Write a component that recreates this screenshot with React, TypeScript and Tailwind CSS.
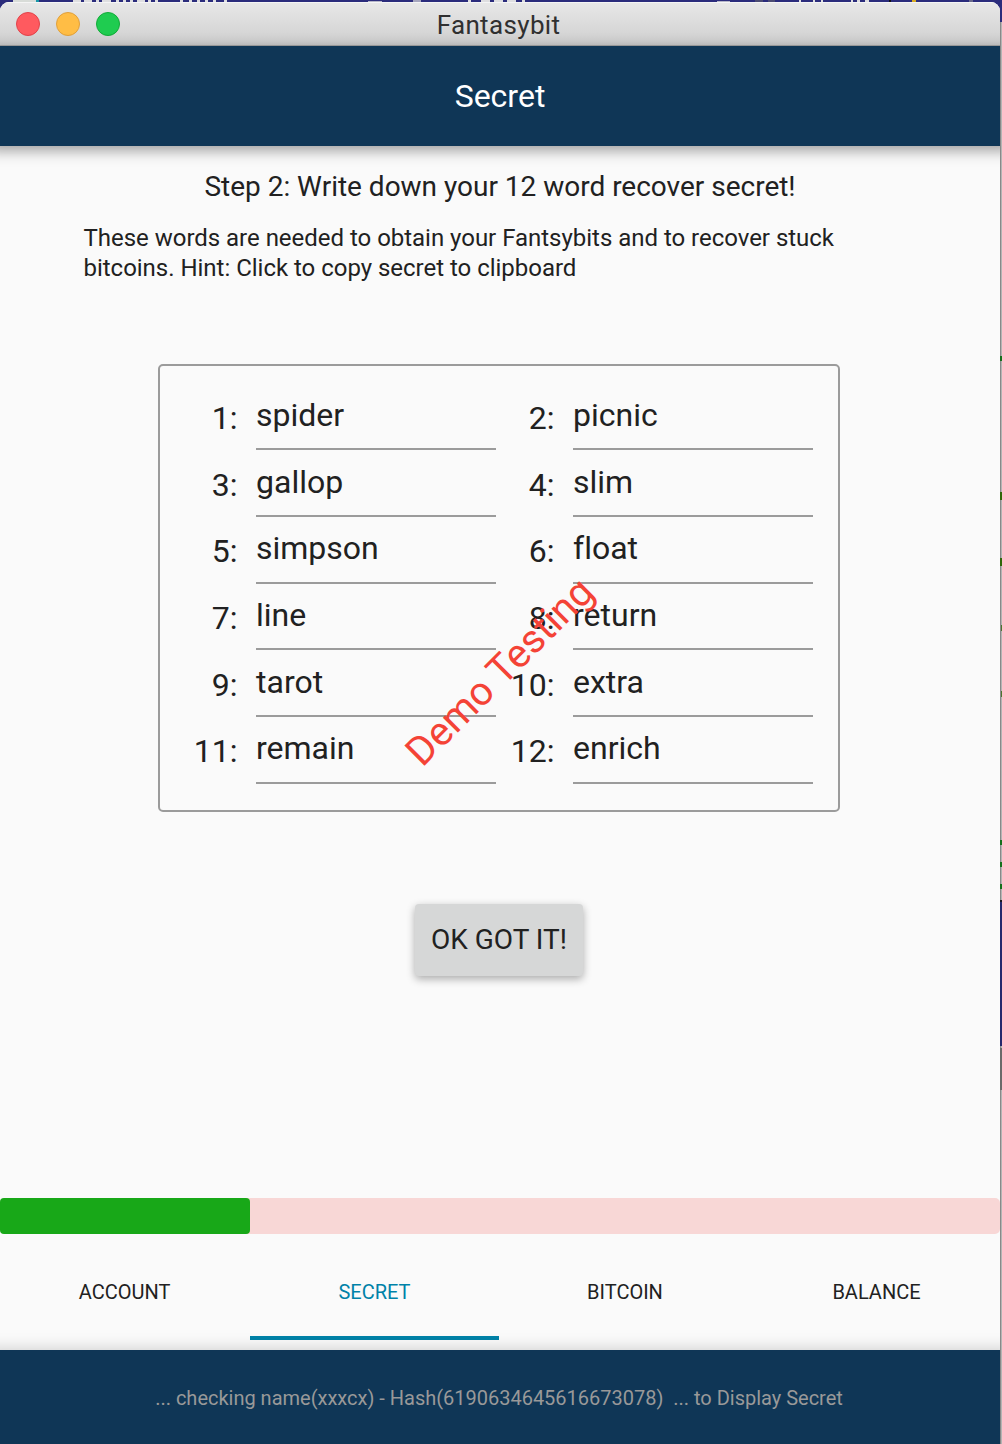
const words = [
  'spider', 'picnic', 'gallop', 'slim', 'simpson', 'float',
  'line', 'return', 'tarot', 'extra', 'remain', 'enrich',
];

const tabs = ['ACCOUNT', 'SECRET', 'BITCOIN', 'BALANCE'];

// Fragments of the desktop that show above the window.
function DesktopTop() {
  return (
    <div className="flex h-[2px] w-[1002px] overflow-hidden bg-[#2b2c7c] *:shrink-0">
      <i className="ml-[13px] h-[2px] w-[23px] bg-[#d8dcd8]" />
      <i className="h-[2px] w-[3px] bg-[#1797a8]" />
      <i className="ml-[34px] h-[2px] w-[8px] bg-[#dedee0]" />
      <i className="ml-[3px] h-[2px] w-[8px] bg-[#dedee0]" />
      <i className="ml-[4px] h-[2px] w-[3px] bg-[#dedee0]" />
      <i className="ml-[3px] h-[2px] w-[9px] bg-[#dedee0]" />
      <i className="ml-[5px] h-[2px] w-[3px] bg-[#dedee0]" />
      <i className="ml-[4px] h-[2px] w-[3px] bg-[#dedee0]" />
      <i className="ml-[4px] h-[2px] w-[3px] bg-[#dedee0]" />
      <i className="ml-[4px] h-[2px] w-[8px] bg-[#dedee0]" />
      <i className="ml-[3px] h-[2px] w-[3px] bg-[#dedee0]" />
      <i className="ml-[4px] h-[2px] w-[3px] bg-[#dedee0]" />
      <i className="ml-[22px] h-[2px] w-[3px] bg-[#dedee0]" />
      <i className="ml-[6px] h-[2px] w-[3px] bg-[#dedee0]" />
      <i className="ml-[5px] h-[2px] w-[3px] bg-[#dedee0]" />
      <i className="ml-[5px] h-[2px] w-[3px] bg-[#dedee0]" />
      <i className="ml-[5px] h-[2px] w-[3px] bg-[#dedee0]" />
      <i className="ml-[8px] h-[2px] w-[3px] bg-[#dedee0]" />
      <i className="ml-[141px] mt-px h-px w-[14px] bg-[#b5b5c8]" />
      <i className="ml-[31px] h-[2px] w-[8px] bg-[#a5a5bd]" />
      <i className="ml-[47px] h-[2px] w-[3px] bg-[#dedee0]" />
      <i className="ml-[10px] h-[2px] w-[9px] bg-[#dedee0]" />
      <i className="ml-[4px] h-[2px] w-[9px] bg-[#dedee0]" />
      <i className="ml-[4px] h-[2px] w-[9px] bg-[#dedee0]" />
      <i className="ml-[6px] h-[2px] w-[3px] bg-[#dedee0]" />
      <i className="ml-[192px] mt-px h-px w-[13px] bg-[#b5b5c8]" />
      <i className="ml-[25px] h-[2px] w-[8px] bg-[#4c4c73]" />
      <i className="ml-[5px] h-[2px] w-[7px] bg-[#4c4c73]" />
      <i className="ml-[24px] h-[2px] w-[2px] bg-[#dedee0]" />
      <i className="ml-[12px] h-[2px] w-[2px] bg-[#dedee0]" />
      <i className="ml-[6px] h-[2px] w-[2px] bg-[#dedee0]" />
      <i className="ml-[28px] h-[2px] w-[2px] bg-[#dedee0]" />
      <i className="ml-[4px] h-[2px] w-[3px] bg-[#dedee0]" />
      <i className="ml-[5px] h-[2px] w-[4px] bg-[#dedee0]" />
      <i className="ml-[20px] h-[2px] w-[2px] bg-[#111]" />
      <i className="ml-[21px] h-[2px] w-[4px] bg-[#d8ac22]" />
      <i className="ml-[53px] h-[2px] w-[4px] bg-[#69698b]" />
    </div>
  );
}

// Two-pixel sliver of the desktop along the window's right side.
function DesktopEdge() {
  return (
    <div className="flex w-[2px] shrink-0 flex-col overflow-hidden bg-linear-to-r from-[#898989] from-50% to-[#b4b4b4] to-50% *:shrink-0">
      <i className="h-[20px] w-full bg-[#2b2c7c]" />
      <i className="mt-[334px] h-[5px] w-full bg-[#14701c]" />
      <i className="mt-[131px] h-[8px] w-full bg-[#2f6708]" />
      <i className="mt-[58px] h-[8px] w-full bg-[#2f6708]" />
      <i className="ml-px mt-[59px] h-[6px] w-px bg-[#4c7430]" />
      <i className="ml-px mt-[60px] h-[6px] w-px bg-[#4c7430]" />
      <i className="mt-[143px] h-[5px] w-full bg-[#14701c]" />
      <i className="mt-[17px] h-[5px] w-full bg-[#14701c]" />
      <i className="mt-[17px] h-[5px] w-full bg-[#14701c]" />
      <i className="mt-[11px] h-[146px] w-full border-t-2 border-[#1a1a20] bg-[#25286c]" />
      <i className="mt-[2px] h-[42px] w-full bg-[#6a6a6a]" />
    </div>
  );
}

function WordField({ index, word }: { index: number; word: string }) {
  return (
    <div className="flex h-[66.67px]">
      <span className="w-[77.5px] shrink-0 pt-[14.37px] text-right leading-[40px]">{index}:</span>
      <div className="ml-[18.5px] w-[240px] shrink-0 border-b-2 border-[#9b9b9b] pt-[11.37px] leading-[40px]">
        {word}
      </div>
    </div>
  );
}

export default function App() {
  return (
    <div className="flex h-[1444px] w-[1002px] flex-col overflow-hidden bg-[#2b2c7c] font-[Roboto,sans-serif] text-[#212121] [font-variant-ligatures:none]">
      <DesktopTop />
      <div className="flex h-[1442px]">
        <main className="flex w-[1000px] flex-col overflow-hidden rounded-t-[9px] bg-[#fafafa]">
          <div className="relative flex h-[44px] shrink-0 items-center justify-center border-b border-[#a9a9a9] bg-linear-to-b from-[#e8e8e8] to-[#cfcfcf] shadow-[inset_0_1px_0_#f5f5f5]">
            <div className="absolute left-[16px] top-[10px] flex gap-4">
              <span className="size-6 rounded-full border border-[#e2434a] bg-[#ff5a5f]" />
              <span className="size-6 rounded-full border border-[#e0a03c] bg-[#ffbd45]" />
              <span className="size-6 rounded-full border border-[#12ab38] bg-[#1fcc50]" />
            </div>
            <h1 className="mt-[3px] pr-[3px] text-[26px] tracking-[0.35px] text-[#303030]">Fantasybit</h1>
          </div>

          <header className="z-10 -mx-[12px] flex h-[100px] shrink-0 items-center justify-center bg-[#0f3656] text-[32px] text-white shadow-[0_4px_14px_rgba(0,0,0,0.4)]">
            Secret
          </header>

          <section className="flex h-[1052px] shrink-0 flex-col items-center">
            <h2 className="mt-[21px] text-[28px] leading-[40px] tracking-[-0.01px]">
              Step 2: Write down your 12 word recover secret!
            </h2>
            <p className="mr-px mt-[16px] w-[832px] text-[24px] leading-[30px] tracking-[-0.022px]">
              These words are needed to obtain your Fantsybits and to recover stuck
              <br />
              bitcoins. Hint: Click to copy secret to clipboard
            </p>

            <div className="relative mr-[2px] mt-[81px] h-[448px] w-[682px] rounded-[5px] border-2 border-[#9b9b9b] pt-[17.63px] text-[32px]">
              <div className="grid grid-cols-[317px_336px]">
                {words.map((word, i) => (
                  <WordField key={word} index={i + 1} word={word} />
                ))}
              </div>
              <span className="absolute left-[340px] top-[306px] -translate-x-1/2 -translate-y-1/2 -rotate-45 whitespace-nowrap text-[40px] leading-[48px] text-[#f44336]">
                Demo Testing
              </span>
            </div>

            <button className="mr-[2px] mt-[92px] h-[72px] w-[168px] rounded-[4px] bg-[#d6d7d7] text-[28px] shadow-[0_3px_8px_rgba(0,0,0,0.32)]">
              OK GOT IT!
            </button>
          </section>

          <div className="h-[36px] shrink-0 rounded-[5px] bg-[#f8d7d6]">
            <div className="h-full w-1/4 rounded-[4px] bg-[#18a818]" />
          </div>

          <nav className="mt-[10px] grid h-[96px] w-[1002px] shrink-0 grid-cols-[250px_249px_253px_250px] text-[20px]">
            {tabs.map((tab) => (
              <button
                key={tab}
                className={
                  tab === 'SECRET'
                    ? 'border-b-4 border-[#0082a8] pt-1 text-[#0082a8]'
                    : 'border-b-4 border-transparent pr-px pt-1'
                }
              >
                {tab}
              </button>
            ))}
          </nav>

          <footer className="-mx-4 mt-[10px] flex h-[94px] shrink-0 items-center justify-center whitespace-pre bg-[#0f3656] pr-[2px] pt-[2px] text-[20px] tracking-[-0.01px] text-[#999] shadow-[0_0_16px_rgba(0,0,0,0.2)]">
            {'... checking name(xxxcx) - Hash(6190634645616673078)  ... to Display Secret'}
          </footer>
        </main>
        <DesktopEdge />
      </div>
    </div>
  );
}
